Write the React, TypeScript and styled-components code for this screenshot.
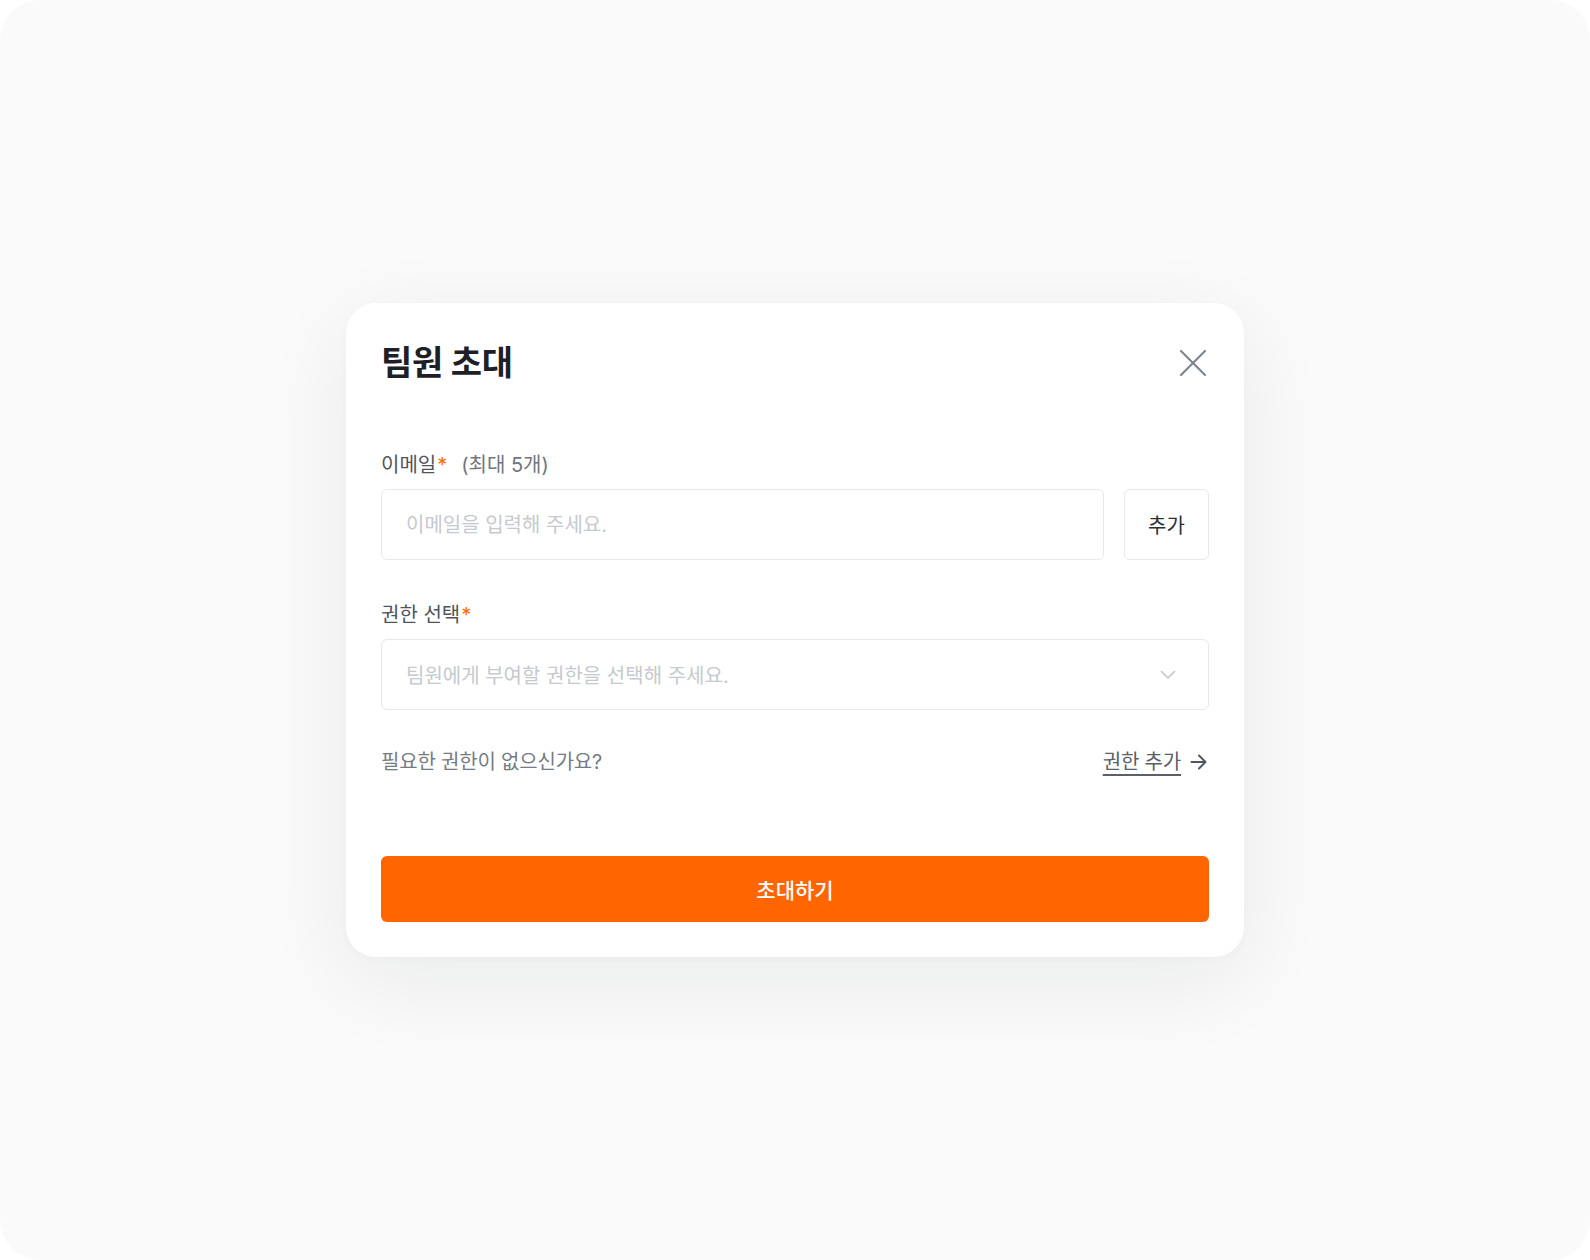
import React, { useState } from "react";
import styled, { createGlobalStyle } from "styled-components";

const GlobalStyle = createGlobalStyle`
  html, body {
    margin: 0;
    padding: 0;
    background: #ffffff;
  }
  * {
    box-sizing: border-box;
  }
  body {
    font-family: "Inter", "Noto Sans CJK KR", sans-serif;
  }
`;

const Frame = styled.div`
  width: 1590px;
  height: 1260px;
  border-radius: 40px;
  background: #fafafa;
  display: flex;
  align-items: center;
  justify-content: center;
`;

const Modal = styled.div`
  width: 898px;
  height: 654px;
  background: #ffffff;
  border-radius: 30px;
  box-shadow: 0 24px 90px rgba(20, 24, 30, 0.07), 0 2px 10px rgba(20, 24, 30, 0.02);
  padding: 36px 35px 35px 35px;
  display: flex;
  flex-direction: column;
`;

const Header = styled.div`
  display: flex;
  align-items: center;
  justify-content: space-between;
  height: 48px;
`;

const Title = styled.h2`
  margin: 0;
  font-size: 34px;
  line-height: 48px;
  font-weight: 700;
  color: #1d2127;
  letter-spacing: -0.3px;
`;

const CloseButton = styled.button`
  border: none;
  background: none;
  padding: 0;
  width: 32px;
  height: 32px;
  display: flex;
  align-items: center;
  justify-content: center;
  cursor: pointer;
  color: #7f8690;
`;

const Body = styled.div`
  display: flex;
  flex-direction: column;
  margin-top: 64px;
`;

const Label = styled.label<{ $top?: number }>`
  display: flex;
  align-items: center;
  font-size: 20px;
  line-height: 28px;
  color: #50555d;
  margin-top: ${(p) => p.$top ?? 0}px;
  margin-bottom: 10px;
`;

const Star = styled.span`
  color: #ff6a00;
  margin-left: 1px;
`;

const Hint = styled.span`
  margin-left: 14px;
  color: #70757d;
`;

const Row = styled.div`
  display: flex;
  gap: 20px;
`;

const Input = styled.input`
  flex: 1;
  height: 71px;
  border: 1.5px solid #e6e8eb;
  border-radius: 6px;
  padding: 0 24px;
  font-family: inherit;
  font-size: 20px;
  color: #2b2f36;
  outline: none;

  &::placeholder {
    color: #c6c9ce;
  }
`;

const AddButton = styled.button`
  width: 85px;
  height: 71px;
  border: 1.5px solid #e6e8eb;
  border-radius: 6px;
  background: #ffffff;
  font-family: inherit;
  font-size: 20px;
  color: #2b2f36;
  cursor: pointer;
`;

const Select = styled.div`
  height: 71px;
  border: 1.5px solid #e6e8eb;
  border-radius: 6px;
  padding: 0 32px 0 24px;
  display: flex;
  align-items: center;
  justify-content: space-between;
  font-size: 20px;
  color: #c6c9ce;
  cursor: pointer;
`;

const HelpRow = styled.div`
  display: flex;
  align-items: center;
  justify-content: space-between;
  margin-top: 38px;
  font-size: 20px;
  line-height: 28px;
  color: #767b83;
  letter-spacing: -0.2px;
`;

const LinkText = styled.a`
  display: flex;
  align-items: center;
  gap: 9px;
  color: #5a5f68;
  text-decoration: none;
  cursor: pointer;
  margin-right: 2px;

  span {
    text-decoration: underline;
    text-underline-offset: 5px;
    text-decoration-thickness: 1.5px;
  }
`;

const SubmitButton = styled.button`
  margin-top: 80px;
  height: 66px;
  width: 100%;
  border: none;
  border-radius: 6px;
  background: #ff6600;
  color: #ffffff;
  font-family: inherit;
  font-size: 21px;
  font-weight: 500;
  cursor: pointer;
`;

function App() {
  const [email, setEmail] = useState("");

  return (
    <>
      <GlobalStyle />
      <Frame>
        <Modal>
          <Header>
            <Title>팀원 초대</Title>
            <CloseButton aria-label="닫기">
              <svg width="28" height="28" viewBox="0 0 28 28" fill="none">
                <path d="M2 2L26 26M26 2L2 26" stroke="currentColor" strokeWidth="2.2" strokeLinecap="round" />
              </svg>
            </CloseButton>
          </Header>

          <Body>
            <Label>
              이메일<Star>*</Star>
              <Hint>(최대 5개)</Hint>
            </Label>
            <Row>
              <Input
                value={email}
                onChange={(e) => setEmail(e.target.value)}
                placeholder="이메일을 입력해 주세요."
              />
              <AddButton>추가</AddButton>
            </Row>

            <Label $top={41}>
              권한 선택<Star>*</Star>
            </Label>
            <Select>
              팀원에게 부여할 권한을 선택해 주세요.
              <svg width="16" height="10" viewBox="0 0 16 10" fill="none">
                <path d="M1.5 1.5L8 8L14.5 1.5" stroke="#c3c7cd" strokeWidth="1.6" strokeLinecap="round" strokeLinejoin="round" />
              </svg>
            </Select>

            <HelpRow>
              필요한 권한이 없으신가요?
              <LinkText>
                <span>권한 추가</span>
                <svg width="17" height="16" viewBox="0 0 17 16" fill="none">
                  <path d="M1.5 8H15.5M9 1.5L15.5 8L9 14.5" stroke="#50555e" strokeWidth="2" strokeLinecap="round" strokeLinejoin="round" />
                </svg>
              </LinkText>
            </HelpRow>
          </Body>

          <SubmitButton>초대하기</SubmitButton>
        </Modal>
      </Frame>
    </>
  );
}

export default App;
